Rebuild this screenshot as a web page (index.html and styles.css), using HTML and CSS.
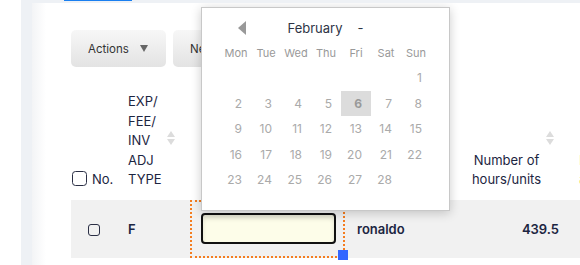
FILE: index.html
```html
<!DOCTYPE html>
<html lang="en">
<head>
    <meta charset="UTF-8">
    <meta name="viewport" content="width=device-width, initial-scale=1.0">
    <title>Timesheet entries</title>
    <link rel="stylesheet" href="styles.css">
</head>
<body>
    <div class="frame">
        <div class="tabs"><span class="tab-active"></span></div>
        <div class="panel">
            <div class="toolbar">
                <button class="btn">Actions <span class="caret"></span></button>
                <button class="btn">New entry</button>
            </div>

            <div class="grid-wrap">
                <table class="grid">
                    <colgroup>
                        <col class="c-no">
                        <col class="c-type">
                        <col class="c-date">
                        <col class="c-user">
                        <col class="c-hours">
                        <col class="c-rate">
                    </colgroup>
                    <thead>
                        <tr>
                            <th class="th-no"><span class="check check-lg"></span>No.</th>
                            <th class="sortable">EXP/<br>FEE/<br>INV<br>ADJ<br>TYPE<span class="sort"></span></th>
                            <th></th>
                            <th></th>
                            <th class="sortable th-hours">Number of<br>hours/units<span class="sort"></span></th>
                            <th class="th-rate">Rate<br>amount</th>
                        </tr>
                    </thead>
                    <tbody>
                        <tr>
                            <td class="td-no"><span class="check"></span></td>
                            <td class="strong">F</td>
                            <td class="editing"><input class="cell-input" type="text"><span class="fill-handle"></span></td>
                            <td class="strong td-user">ronaldo</td>
                            <td class="strong num">439.5</td>
                            <td></td>
                        </tr>
                    </tbody>
                </table>
            </div>

            <!-- datepicker opened on the date cell -->
            <div class="datepicker">
                <div class="dp-title">
                    <span class="dp-prev"></span>
                    <span class="dp-month">February</span><span class="dp-sep">-</span>
                </div>
                <table class="dp-days">
                    <thead>
                        <tr><th>Mon</th><th>Tue</th><th>Wed</th><th>Thu</th><th>Fri</th><th>Sat</th><th>Sun</th></tr>
                    </thead>
                    <tbody>
                        <tr><td></td><td></td><td></td><td></td><td></td><td></td><td><span>1</span></td></tr>
                        <tr><td><span>2</span></td><td><span>3</span></td><td><span>4</span></td><td><span>5</span></td><td><span class="today">6</span></td><td><span>7</span></td><td><span>8</span></td></tr>
                        <tr><td><span>9</span></td><td><span>10</span></td><td><span>11</span></td><td><span>12</span></td><td><span>13</span></td><td><span>14</span></td><td><span>15</span></td></tr>
                        <tr><td><span>16</span></td><td><span>17</span></td><td><span>18</span></td><td><span>19</span></td><td><span>20</span></td><td><span>21</span></td><td><span>22</span></td></tr>
                        <tr><td><span>23</span></td><td><span>24</span></td><td><span>25</span></td><td><span>26</span></td><td><span>27</span></td><td><span>28</span></td><td></td></tr>
                    </tbody>
                </table>
            </div>
        </div>
    </div>
</body>
</html>
```

FILE: styles.css
```css
html, body { margin: 0; padding: 0; background: #fff; overflow: hidden; }
body { font-family: Inter, "Liberation Sans", sans-serif; color: #1c2541; }

.frame { margin-left: 21px; padding-left: 11px; background: #eef1f5; height: 265px; }
.tabs { height: 3px; }
.tab-active { display: block; margin-left: 32px; width: 68px; height: 1px; background: #1a7ff0; }

.panel {
    position: relative;
    height: 262px;
    padding-left: 39px;
    background: linear-gradient(to right, #f3f4f6, #fff 14px);
    overflow: hidden;
}

/* toolbar */
.toolbar { display: flex; gap: 7px; padding-top: 27px; }
.btn {
    height: 37px;
    padding: 0 17px;
    border: none;
    border-radius: 5px;
    background: linear-gradient(#f7f7f7, #e3e3e3);
    font-family: inherit;
    font-size: 11.5px;
    color: #333;
    display: flex;
    align-items: center;
}
.btn:first-child { width: 95px; }
.btn:last-child { width: 120px; }
.caret {
    margin-left: 11px;
    border-left: 4px solid transparent;
    border-right: 4px solid transparent;
    border-top: 7px solid #666;
}

/* grid */
.grid-wrap { margin-top: 13px; width: 620px; }
.grid { border-collapse: separate; border-spacing: 0; table-layout: fixed; width: 620px; font-size: 13px; }
.c-no { width: 49px; }
.c-type { width: 70px; }
.c-date { width: 155px; }
.c-user { width: 115px; }
.c-hours { width: 107px; }
.c-rate { width: 124px; }

.grid th {
    position: relative;
    font-weight: normal;
    text-align: left;
    vertical-align: bottom;
    line-height: 19.5px;
    padding: 12px 8px 10px;
}
.grid th.th-no { padding-left: 0; padding-right: 0; white-space: nowrap; }
.grid th.th-hours { text-align: center; padding-right: 22px; }
.grid th.th-rate { padding-left: 12px; color: #f3d870; }
.sort { position: absolute; right: 14px; top: 50%; margin-top: -9px; width: 9px; height: 17px; }
.th-hours .sort { right: 12px; }
.sort::before, .sort::after {
    content: "";
    position: absolute;
    left: 0;
    border-left: 4.5px solid transparent;
    border-right: 4.5px solid transparent;
}
.sort::before { top: 0; border-bottom: 6px solid #dcdcdc; }
.sort::after { top: 8px; border-top: 6px solid #dcdcdc; }

.check { display: inline-block; box-sizing: border-box; width: 12px; height: 12px; border: 1.5px solid #2a2f45; border-radius: 3px; vertical-align: middle; }
.check-lg { width: 15px; height: 15px; border-radius: 3.5px; margin-left: 1px; margin-right: 5px; vertical-align: -2px; }

.grid td { height: 58px; padding: 0 8px; background: #f1f1f1; vertical-align: middle; box-sizing: border-box; }
.grid td.td-no { padding-left: 17px; }
.grid td.td-user { padding-left: 12px; }
.grid td.num { text-align: right; }
.strong { font-weight: 600; }

.grid td.editing {
    position: relative;
    border: 2px dotted #f47d20;
    padding: 0 7px 1px 9px;
}
.cell-input {
    display: block;
    box-sizing: border-box;
    width: 135px;
    height: 31px;
    border: 2px solid #111;
    border-radius: 4px;
    background: #fdfde9;
    box-shadow: inset 0 3px 4px rgba(0, 0, 0, 0.12);
    outline: none;
}
.fill-handle { position: absolute; right: -5px; bottom: -4px; width: 10px; height: 10px; background: #3366ff; }

/* datepicker */
.datepicker {
    position: absolute;
    left: 169px;
    top: 4px;
    width: 249px;
    height: 204px;
    box-sizing: border-box;
    padding: 8px 0 0 19px;
    background: #fff;
    border: 1px solid #c8c8c8;
    box-shadow: 0 2px 10px rgba(0, 0, 0, 0.2);
}
.dp-title { position: relative; height: 25px; line-height: 25px; text-align: center; padding-right: 19px; font-size: 13px; color: #2e3445; }
.dp-prev {
    position: absolute;
    left: 17px;
    top: 5px;
    border-top: 7px solid transparent;
    border-bottom: 7px solid transparent;
    border-right: 8px solid #999;
}
.dp-sep { margin-left: 15px; }
.dp-days { border-collapse: collapse; table-layout: fixed; width: 210px; }
.dp-days th { width: 30px; height: 24px; padding: 0; font-weight: normal; font-size: 11px; color: #999; text-align: center; }
.dp-days td { padding: 0; height: 25.5px; }
.dp-days td span { display: block; height: 25.5px; line-height: 25.5px; padding-right: 9px; text-align: right; font-size: 12px; color: #aaa; }
.dp-days td span.today { background: #dcdcdc; color: #999; font-weight: 700; }
```
